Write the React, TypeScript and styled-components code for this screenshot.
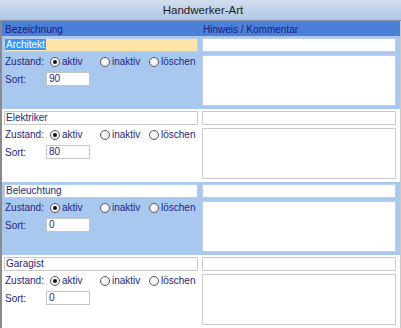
import React from "react";
import styled, { createGlobalStyle } from "styled-components";

const GlobalStyle = createGlobalStyle`
  html, body {
    margin: 0;
    padding: 0;
    background: #ffffff;
  }
  body {
    font-family: "Liberation Sans", Arial, sans-serif;
  }
`;

const Window = styled.div`
  width: 401px;
  height: 328px;
  overflow: hidden;
  display: flex;
  flex-direction: column;
`;

const TitleBar = styled.div`
  height: 20px;
  flex: none;
  display: flex;
  align-items: center;
  justify-content: center;
  padding-left: 5px;
  background: linear-gradient(#d3dff0, #aec6e6);
  border-bottom: 1px solid #8594ab;
  font-family: "Liberation Sans", Arial, sans-serif;
  font-size: 11.5px;
  color: #1c1c1c;
`;

const Body = styled.div`
  flex: 1;
  border-left: 2px solid #8b8b8b;
  border-right: 1px solid #c9c9c9;
  display: flex;
  flex-direction: column;
`;

const HeaderRow = styled.div`
  height: 15px;
  flex: none;
  display: grid;
  grid-template-columns: 198px 1fr;
  align-items: center;
  background: #4c7fd7;
  color: #16217a;
  font-size: 10px;
`;

const HeaderCell = styled.div<{ $pad: number }>`
  padding-left: ${({ $pad }) => $pad}px;
  padding-top: 1px;
`;

const Row = styled.div<{ $blue: boolean }>`
  height: 73px;
  flex: none;
  box-sizing: border-box;
  display: grid;
  grid-template-columns: 198px 1fr;
  background: ${({ $blue }) => ($blue ? "#a9c8f0" : "#ffffff")};
  color: #26267e;
  font-size: 10px;
`;

const LeftCol = styled.div`
  padding: 2px 0 0 2px;
  display: flex;
  flex-direction: column;
`;

const RightCol = styled.div`
  padding: 2px 0 0 2px;
  display: flex;
  flex-direction: column;
  gap: 3px;
`;

const NameBox = styled.div<{ $active: boolean; $blue: boolean }>`
  width: 194px;
  height: 14px;
  box-sizing: border-box;
  border: 1px solid ${({ $blue }) => ($blue ? "#b6cdec" : "#c8c8c8")};
  background: ${({ $active }) => ($active ? "#fde5aa" : "#ffffff")};
  line-height: 12px;
  padding-left: 0px;
  white-space: nowrap;
  overflow: hidden;
`;

const Selected = styled.span`
  background: #3399ff;
  color: #ffffff;
  padding: 0 1px;
`;

const PlainText = styled.span`
  padding-left: 1px;
`;

const StateLine = styled.div`
  height: 19px;
  display: flex;
  align-items: center;
  padding-left: 1px;
`;

const Label = styled.span`
  width: 45px;
  flex: none;
`;

const Option = styled.label<{ $w: number }>`
  width: ${({ $w }) => $w}px;
  flex: none;
  display: flex;
  align-items: center;
  gap: 2px;
`;

const Radio = styled.span<{ $on: boolean }>`
  width: 10px;
  height: 10px;
  box-sizing: border-box;
  border-radius: 50%;
  border: 1px solid #5a5a5a;
  background: radial-gradient(circle at 40% 35%, #ffffff, #e4e4e4);
  display: flex;
  align-items: center;
  justify-content: center;

  &::after {
    content: "";
    width: 4px;
    height: 4px;
    border-radius: 50%;
    background: #111111;
    display: ${({ $on }) => ($on ? "block" : "none")};
  }
`;

const SortLine = styled.div`
  display: flex;
  align-items: center;
  padding-left: 1px;
  margin-top: 1px;
`;

const SortLabel = styled.span`
  width: 41px;
  flex: none;
`;

const SortBox = styled.div`
  width: 44px;
  height: 14px;
  box-sizing: border-box;
  border: 1px solid #c4c4c4;
  background: #ffffff;
  line-height: 12px;
  padding-left: 2px;
`;

const CommentBox = styled.div<{ $blue: boolean }>`
  width: 194px;
  height: 14px;
  box-sizing: border-box;
  background: #ffffff;
  border: 1px solid ${({ $blue }) => ($blue ? "#bcd0ea" : "#cbcbcb")};
`;

const CommentArea = styled.div<{ $blue: boolean }>`
  width: 194px;
  height: 51px;
  box-sizing: border-box;
  background: #ffffff;
  border: 1px solid ${({ $blue }) => ($blue ? "#bcd0ea" : "#cbcbcb")};
`;

interface Trade {
  name: string;
  sort: string;
}

const trades: Trade[] = [
  { name: "Architekt", sort: "90" },
  { name: "Elektriker", sort: "80" },
  { name: "Beleuchtung", sort: "0" },
  { name: "Garagist", sort: "0" },
];

const App: React.FC = () => {
  return (
    <>
      <GlobalStyle />
      <Window>
        <TitleBar>Handwerker-Art</TitleBar>
        <Body>
          <HeaderRow>
            <HeaderCell $pad={3}>Bezeichnung</HeaderCell>
            <HeaderCell $pad={3}>Hinweis / Kommentar</HeaderCell>
          </HeaderRow>
          {trades.map((t, i) => {
            const blue = i % 2 === 0;
            const active = i === 0;
            return (
              <Row key={t.name} $blue={blue}>
                <LeftCol>
                  <NameBox $active={active} $blue={blue}>
                    {active ? <Selected>{t.name}</Selected> : <PlainText>{t.name}</PlainText>}
                  </NameBox>
                  <StateLine>
                    <Label>Zustand:</Label>
                    <Option $w={50}>
                      <Radio $on={true} />
                      aktiv
                    </Option>
                    <Option $w={49}>
                      <Radio $on={false} />
                      inaktiv
                    </Option>
                    <Option $w={50}>
                      <Radio $on={false} />
                      löschen
                    </Option>
                  </StateLine>
                  <SortLine>
                    <SortLabel>Sort:</SortLabel>
                    <SortBox>{t.sort}</SortBox>
                  </SortLine>
                </LeftCol>
                <RightCol>
                  <CommentBox $blue={blue} />
                  <CommentArea $blue={blue} />
                </RightCol>
              </Row>
            );
          })}
        </Body>
      </Window>
    </>
  );
};

export default App;
